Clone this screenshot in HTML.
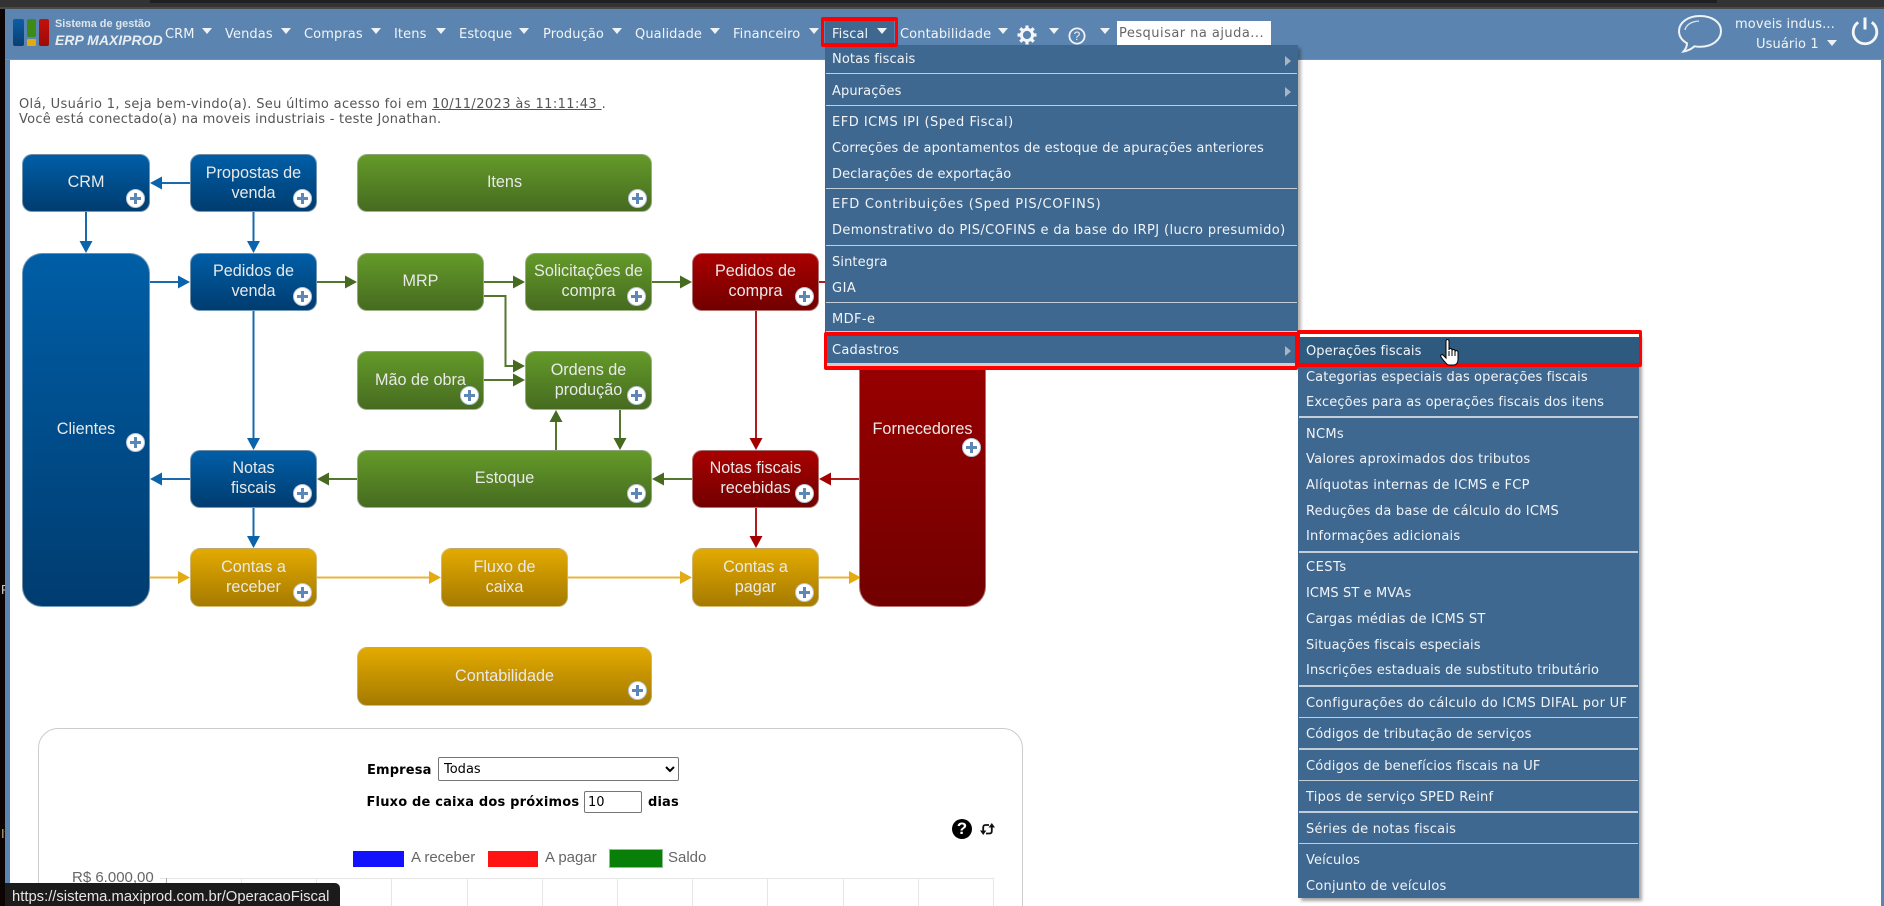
<!DOCTYPE html>
<html lang="pt-BR"><head><meta charset="utf-8"><title>ERP MAXIPROD</title>
<style>
html,body{margin:0;padding:0;width:1884px;height:906px;overflow:hidden;background:#fff}
body{position:relative;font-family:"DejaVu Sans","Liberation Sans",sans-serif}
.a{position:absolute}
.m{position:absolute;font-size:13px;line-height:20px;color:#f2f4f7;white-space:nowrap;letter-spacing:.15px}
.h{letter-spacing:.1px}
.c{position:absolute;width:0;height:0;border-left:5.5px solid transparent;border-right:5.5px solid transparent;border-top:6px solid #f0f3f6}
.s{position:absolute;height:1px;background:#c3cdd8}
.t{position:absolute;width:0;height:0;border-top:5px solid transparent;border-bottom:5px solid transparent;border-left:6px solid #a9b5c1}
.b{position:absolute;box-sizing:border-box;border:1px solid rgba(205,205,205,.55);border-radius:10px;color:#e9e9e9;font:16.2px/20px "Liberation Sans",sans-serif;text-align:center}
.bl{background:linear-gradient(#005ea6,#003c70)}
.gr{background:linear-gradient(#649a29,#466b20)}
.rd{background:linear-gradient(#a80000,#720000)}
.yl{background:linear-gradient(#e3aa00,#a57a00)}
.b span{position:absolute;left:0;right:0;white-space:nowrap}
.p{position:absolute;width:19px;height:19px;box-sizing:border-box;border-radius:50%;background:#fff;border:1px solid #b8c6d8}
.p:before{content:"";position:absolute;left:3px;right:3px;top:7px;height:3px;background:#5c88b8}
.p:after{content:"";position:absolute;top:3px;bottom:3px;left:7px;width:3px;background:#5c88b8}
.red{position:absolute;box-sizing:border-box;border-style:solid;border-color:#f00;border-radius:2px}
.g{position:absolute;top:878px;width:1px;height:28px;background:#e6e6e6}
.l{position:absolute;font:15px/18px "Liberation Sans",sans-serif;color:#666;white-space:nowrap}
.bd{position:absolute;font-size:13px;line-height:20px;font-weight:bold;color:#000;white-space:nowrap;letter-spacing:.15px}
</style></head><body>
<!-- window chrome -->
<div class="a" style="left:0;top:0;width:1884px;height:9px;background:#333"></div>
<div class="a" style="left:150px;top:0;width:1567px;height:3px;background:#1e2024"></div>
<div class="a" style="left:0;top:7px;width:1884px;height:2px;background:#4a4a4a"></div>
<div class="a" style="left:0;top:9px;width:5px;height:897px;background:#0d0404"></div>
<div class="a" style="left:5px;top:9px;width:5px;height:897px;background:#5b85b0"></div>
<div class="a" style="left:1881px;top:9px;width:3px;height:897px;background:#5b85b0"></div>
<div class="a" style="left:1px;top:582px;font:13px/16px 'Liberation Sans',sans-serif;color:#ccc;width:4px;overflow:hidden">R</div>
<div class="a" style="left:1px;top:826px;font:13px/16px 'Liberation Sans',sans-serif;color:#c9a96a;width:4px;overflow:hidden">It</div>
<!-- header -->
<div class="a" style="left:5px;top:9px;width:1879px;height:50px;background:#5b85b0;border-bottom:1px solid #7f8c99"></div>
<!-- logo -->
<div class="a" style="left:13px;top:19px;width:11px;height:27px;border-radius:2px;background:linear-gradient(#0b5ea8,#0a3f70)"></div>
<div class="a" style="left:27px;top:19px;width:9px;height:18px;border-radius:2px;background:#3c8a17"></div>
<div class="a" style="left:27px;top:39px;width:9px;height:7px;border-radius:1px;background:#e2aa10"></div>
<div class="a" style="left:39px;top:19px;width:10px;height:27px;border-radius:2px;background:linear-gradient(#c4100c,#9c0a08)"></div>
<div class="a" style="left:55px;top:16px;font:bold 10.900px/16px 'Liberation Sans',sans-serif;color:#dfe5ec;white-space:nowrap">Sistema de gestão</div>
<div class="a" style="left:55px;top:31px;font:italic bold 14px/18px 'Liberation Sans',sans-serif;color:#e8edf2;white-space:nowrap">ERP MAXIPROD</div>
<!-- top menu -->
<span class="m h" style="left:165px;top:25px">CRM</span><i class="c" style="left:202px;top:28px"></i>
<span class="m h" style="left:225px;top:25px">Vendas</span><i class="c" style="left:281px;top:28px"></i>
<span class="m h" style="left:304px;top:25px">Compras</span><i class="c" style="left:371px;top:28px"></i>
<span class="m h" style="left:394px;top:25px">Itens</span><i class="c" style="left:436px;top:28px"></i>
<span class="m h" style="left:459px;top:25px">Estoque</span><i class="c" style="left:519px;top:28px"></i>
<span class="m h" style="left:543px;top:25px">Produção</span><i class="c" style="left:612px;top:28px"></i>
<span class="m h" style="left:635px;top:25px">Qualidade</span><i class="c" style="left:710px;top:28px"></i>
<span class="m h" style="left:733px;top:25px">Financeiro</span><i class="c" style="left:809px;top:28px"></i>
<div class="a" style="left:825px;top:21px;width:69px;height:24px;background:#3f6890"></div>
<span class="m h" style="left:832px;top:25px">Fiscal</span><i class="c" style="left:877px;top:28px"></i>
<span class="m h" style="left:900px;top:25px">Contabilidade</span><i class="c" style="left:998px;top:28px"></i>
<svg class="a" style="left:1017px;top:25px" width="20" height="20" viewBox="0 0 20 20"><g fill="none" stroke="#f4f6f8"><circle cx="10" cy="10" r="5.6" stroke-width="3"/><path d="M10 0.5v3M10 16.5v3M.5 10h3M16.5 10h3M3.3 3.3l2.1 2.1M14.6 14.6l2.1 2.1M3.3 16.7l2.1-2.1M14.6 5.4l2.1-2.1" stroke-width="3.2"/></g></svg>
<i class="c" style="left:1049px;top:28px"></i>
<svg class="a" style="left:1068px;top:26.500px" width="18" height="18" viewBox="0 0 18 18"><circle cx="9" cy="9" r="7.6" fill="none" stroke="#f0f3f6" stroke-width="1.8"/><text x="9" y="13.2" text-anchor="middle" font-family="Liberation Sans" font-size="12" fill="#f0f3f6">?</text></svg>
<i class="c" style="left:1100px;top:28px"></i>
<div class="a" style="left:1117px;top:21px;width:154px;height:24px;background:#fff;box-sizing:border-box;padding-left:2px;font-size:13px;line-height:26px;letter-spacing:.47px;color:#666;white-space:nowrap;overflow:hidden">Pesquisar na ajuda...</div>
<!-- right -->
<svg class="a" style="left:1676px;top:13px" width="48" height="42" viewBox="0 0 48 42"><path d="M24 3C12 3 3 9.500 3 18c0 5 3 9.500 8 12.300 0 3-1.500 6-3.500 8.200 4-.5 8-2.500 11-5.200 1.700.3 3.500.5 5.500.5 12 0 21-6.800 21-15.800S36 3 24 3z" fill="none" stroke="#f0f3f6" stroke-width="2"/><path d="M9 17c1-5 6-8.500 14-9" fill="none" stroke="#dfe6ee" stroke-width="1.3"/></svg>
<span class="m h" style="left:1735px;top:15px">moveis indus...</span>
<span class="m h" style="left:1756px;top:35px">Usuário 1</span><i class="c" style="left:1827px;top:40px"></i>
<svg class="a" style="left:1851px;top:16px" width="28" height="30" viewBox="0 0 28 30"><path d="M7.200 6.300A11.800 11.800 0 1 0 20.800 6.300" fill="none" stroke="#f4f6f8" stroke-width="2.800"/><path d="M14 1.500v12" stroke="#f4f6f8" stroke-width="3" fill="none"/></svg>
<!-- greeting -->
<div class="a" style="left:19px;top:97px;font-size:13px;line-height:15px;letter-spacing:.32px;color:#555;white-space:nowrap">Olá, Usuário 1, seja bem-vindo(a). Seu último acesso foi em <u style="letter-spacing:.4px">10/11/2023 às 11:11:43 </u>.<br><span style="letter-spacing:.24px">Você está conectado(a) na moveis industriais - teste Jonathan.</span></div>
<!-- diagram connectors -->
<svg class="a" style="left:0;top:0" width="1884" height="906">
<g stroke="#1a68ae" stroke-width="2" fill="#0a63ad">
<path d="M190 183H160M86 212v31M253.500 212v31M150 282h31M253.500 311v131M190 479h-30M253.500 508v31" fill="none"/>
<path stroke="none" d="M150 183l12-6.500v13zM86 253l-6.500-12h13zM253.500 253l-6.500-12h13zM190 282l-12-6.500v13zM253.500 450l-6.500-12h13zM150 479l12-6.500v13zM253.500 548l-6.500-12h13z"/></g>
<g stroke="#53772d" stroke-width="2" fill="#466b20">
<path d="M317 282h30M484 282h31M652 282h30M484 296h21.500v70H516M484 380h31M357 479h-30M556 450v-30M620 410v31M692 479h-30" fill="none"/>
<path stroke="none" d="M357 282l-12-6.500v13zM525 282l-12-6.500v13zM692 282l-12-6.500v13zM525 366l-12-6.500v13zM525 380l-12-6.500v13zM317 479l12-6.500v13zM556 410l-6.500 12h13zM620 450l-6.500-12h13zM652 479l12-6.500v13z"/></g>
<g stroke="#b11c1c" stroke-width="2" fill="#a50000">
<path d="M819 282h6M756 311v131M756 508v31M859 479h-30" fill="none" />
<path stroke="none" d="M756 450l-6.500-12h13zM756 548l-6.500-12h13zM819 479l12-6.500v13z"/></g>
<g stroke="#e9b43d" stroke-width="2" fill="#e3aa12">
<path d="M150 577.500h31M317 577.500h115M568 577.500h115M819 577.500h30" fill="none"/>
<path stroke="none" d="M190 577.500l-12-6.500v13zM441 577.500l-12-6.500v13zM692 577.500l-12-6.500v13zM861 577.500l-12-6.500v13z"/></g>
</svg>
<!-- boxes -->
<div class="b bl" style="left:22px;top:154px;width:128px;height:58px"><span style="top:17px">CRM</span></div>
<div class="b bl" style="left:190px;top:154px;width:127px;height:58px"><span style="top:8px">Propostas de</span><span style="top:28px">venda</span></div>
<div class="b gr" style="left:357px;top:154px;width:295px;height:58px"><span style="top:17px">Itens</span></div>
<div class="b bl" style="left:22px;top:253px;width:128px;height:354px;border-radius:20px"><span style="top:165px">Clientes</span></div>
<div class="b bl" style="left:190px;top:253px;width:127px;height:58px"><span style="top:7px">Pedidos de</span><span style="top:27px">venda</span></div>
<div class="b gr" style="left:357px;top:253px;width:127px;height:58px"><span style="top:17px">MRP</span></div>
<div class="b gr" style="left:525px;top:253px;width:127px;height:58px"><span style="top:7px">Solicitações de</span><span style="top:27px">compra</span></div>
<div class="b rd" style="left:692px;top:253px;width:127px;height:58px"><span style="top:7px">Pedidos de</span><span style="top:27px">compra</span></div>
<div class="b gr" style="left:357px;top:351px;width:127px;height:59px"><span style="top:18px">Mão de obra</span></div>
<div class="b gr" style="left:525px;top:351px;width:127px;height:59px"><span style="top:8px">Ordens de</span><span style="top:28px">produção</span></div>
<div class="b bl" style="left:190px;top:450px;width:127px;height:58px"><span style="top:7px">Notas</span><span style="top:27px">fiscais</span></div>
<div class="b gr" style="left:357px;top:450px;width:295px;height:58px"><span style="top:17px">Estoque</span></div>
<div class="b rd" style="left:692px;top:450px;width:127px;height:58px"><span style="top:7px">Notas fiscais</span><span style="top:27px">recebidas</span></div>
<div class="b yl" style="left:190px;top:548px;width:127px;height:59px"><span style="top:8px">Contas a</span><span style="top:28px">receber</span></div>
<div class="b yl" style="left:441px;top:548px;width:127px;height:59px"><span style="top:8px">Fluxo de</span><span style="top:28px">caixa</span></div>
<div class="b yl" style="left:692px;top:548px;width:127px;height:59px"><span style="top:8px">Contas a</span><span style="top:28px">pagar</span></div>
<div class="b rd" style="left:859px;top:253px;width:127px;height:354px;border-radius:20px"><span style="top:165px">Fornecedores</span></div>
<div class="b yl" style="left:357px;top:647px;width:295px;height:59px"><span style="top:18px">Contabilidade</span></div>
<!-- plus buttons -->
<i class="p" style="left:126px;top:189px"></i><i class="p" style="left:293px;top:189px"></i><i class="p" style="left:628px;top:189px"></i>
<i class="p" style="left:126px;top:433px"></i><i class="p" style="left:293px;top:287px"></i>
<i class="p" style="left:460px;top:386px"></i><i class="p" style="left:293px;top:484px"></i><i class="p" style="left:293px;top:583px"></i>
<i class="p" style="left:627px;top:287px"></i><i class="p" style="left:795px;top:287px"></i><i class="p" style="left:627px;top:386px"></i>
<i class="p" style="left:627px;top:484px"></i><i class="p" style="left:795px;top:484px"></i><i class="p" style="left:795px;top:583px"></i>
<i class="p" style="left:962px;top:438px"></i><i class="p" style="left:628px;top:681px"></i>
<!-- chart panel -->
<div class="a" style="left:38px;top:728px;width:985px;height:200px;box-sizing:border-box;border:1px solid #ccc;border-radius:20px;background:#fff"></div>
<span class="bd" style="left:367px;top:761px">Empresa</span>
<select class="a" style="left:438px;top:757px;width:241px;height:24px;font:13px 'DejaVu Sans',sans-serif;background:#fff;border:1px solid #767676;border-radius:2px;color:#000;padding:0 1px"><option>Todas</option></select>
<span class="bd" style="left:366.500px;top:793px;letter-spacing:.18px">Fluxo de caixa dos próximos</span>
<div class="a" style="left:584px;top:791px;width:58px;height:22px;box-sizing:border-box;border:1px solid #767676;border-radius:2px;font-size:13px;line-height:21px;padding-left:3px;color:#000">10</div>
<span class="bd" style="left:648px;top:793px">dias</span>
<div class="a" style="left:952px;top:819px;width:20px;height:20px;border-radius:50%;background:#000;color:#fff;font:bold 17px/20px 'Liberation Sans',sans-serif;text-align:center">?</div>
<svg class="a" style="left:980px;top:821px" width="15" height="16" viewBox="0 0 15 16"><path d="M9 4H5.500C4 4 3.200 5 3.200 6.500V11M6 12.500h3.500c1.500 0 2.300-1 2.300-2.500V5.500" fill="none" stroke="#111" stroke-width="1.800"/><path d="M0 9.500h6.400L3.200 14zM8.600 6.500H15L11.800 2z" fill="#111"/></svg>
<div class="a" style="left:353px;top:851px;width:51px;height:16px;background:#1212ff"></div><span class="l" style="left:411px;top:849px">A receber</span>
<div class="a" style="left:488px;top:851px;width:50px;height:16px;background:#ff1414"></div><span class="l" style="left:545px;top:849px">A pagar</span>
<div class="a" style="left:609px;top:849px;width:54px;height:19px;box-sizing:border-box;border:1px solid #8fbf8f;background:#087f08"></div><span class="l" style="left:668px;top:849px">Saldo</span>
<span class="l" style="left:72px;top:869px">R$ 6.000,00</span>
<div class="a" style="left:160px;top:878px;width:833px;height:1px;background:#e6e6e6"></div>
<i class="g" style="left:166px;background:#aaa"></i><i class="g" style="left:241px"></i><i class="g" style="left:316px"></i><i class="g" style="left:391px"></i><i class="g" style="left:467px"></i><i class="g" style="left:542px"></i><i class="g" style="left:617px"></i><i class="g" style="left:692px"></i><i class="g" style="left:767px"></i><i class="g" style="left:843px"></i><i class="g" style="left:918px"></i><i class="g" style="left:993px"></i>
<!-- fiscal dropdown -->
<div class="a" style="left:825px;top:45px;width:473px;height:320px;background:#3f6890;box-shadow:3px 3px 3px rgba(0,0,0,.3)"></div>
<span class="m" style="left:832px;top:50px;letter-spacing:.1px">Notas fiscais</span><i class="t" style="left:1285px;top:56px"></i>
<div class="s" style="left:826px;top:73px;width:471px"></div>
<span class="m" style="left:832px;top:82px;letter-spacing:.1px">Apurações</span><i class="t" style="left:1285px;top:87px"></i>
<div class="s" style="left:826px;top:105px;width:471px"></div>
<span class="m" style="left:832px;top:113px;letter-spacing:.5px">EFD ICMS IPI (Sped Fiscal)</span>
<span class="m" style="left:832px;top:139px">Correções de apontamentos de estoque de apurações anteriores</span>
<span class="m" style="left:832px;top:165px;letter-spacing:.07px">Declarações de exportação</span>
<div class="s" style="left:826px;top:188px;width:471px"></div>
<span class="m" style="left:832px;top:195px;letter-spacing:.75px">EFD Contribuições (Sped PIS/COFINS)</span>
<span class="m" style="left:832px;top:221px;letter-spacing:.38px">Demonstrativo do PIS/COFINS e da base do IRPJ (lucro presumido)</span>
<div class="s" style="left:826px;top:245px;width:471px"></div>
<span class="m" style="left:832px;top:253px;letter-spacing:.1px">Sintegra</span>
<span class="m" style="left:832px;top:279px;letter-spacing:.5px">GIA</span>
<div class="s" style="left:826px;top:302px;width:471px"></div>
<span class="m" style="left:832px;top:310px;letter-spacing:.4px">MDF-e</span>
<div class="s" style="left:826px;top:331px;width:471px"></div>
<span class="m" style="left:832px;top:341px;letter-spacing:.25px">Cadastros</span><i class="t" style="left:1285px;top:346px"></i>
<div class="a" style="left:825px;top:363px;width:473px;height:3px;background:#c9cfd3"></div>
<!-- cadastros submenu -->
<div class="a" style="left:1298px;top:334px;width:341px;height:564px;background:#3f6890;box-shadow:3px 3px 3px rgba(0,0,0,.35)"></div>
<div class="a" style="left:1298px;top:334px;width:341px;height:3px;background:#fff"></div>
<div class="a" style="left:1298px;top:337px;width:341px;height:26px;background:#2e5a80"></div>
<span class="m" style="left:1306px;top:342px;letter-spacing:.07px">Operações fiscais</span>
<span class="m" style="left:1306px;top:368px;letter-spacing:.1px">Categorias especiais das operações fiscais</span>
<span class="m" style="left:1306px;top:393px;letter-spacing:.13px">Exceções para as operações fiscais dos itens</span>
<div class="s" style="left:1299px;top:416px;width:339px;height:2px"></div>
<span class="m" style="left:1306px;top:425px;letter-spacing:.3px">NCMs</span>
<span class="m" style="left:1306px;top:450px;letter-spacing:.24px">Valores aproximados dos tributos</span>
<span class="m" style="left:1306px;top:476px;letter-spacing:.27px">Alíquotas internas de ICMS e FCP</span>
<span class="m" style="left:1306px;top:502px;letter-spacing:.22px">Reduções da base de cálculo do ICMS</span>
<span class="m" style="left:1306px;top:527px;letter-spacing:.22px">Informações adicionais</span>
<div class="s" style="left:1299px;top:551px;width:339px;height:2px"></div>
<span class="m" style="left:1306px;top:558px;letter-spacing:.5px">CESTs</span>
<span class="m" style="left:1306px;top:584px;letter-spacing:.1px">ICMS ST e MVAs</span>
<span class="m" style="left:1306px;top:610px;letter-spacing:.24px">Cargas médias de ICMS ST</span>
<span class="m" style="left:1306px;top:636px;letter-spacing:.1px">Situações fiscais especiais</span>
<span class="m" style="left:1306px;top:661px;letter-spacing:.16px">Inscrições estaduais de substituto tributário</span>
<div class="s" style="left:1299px;top:685px;width:339px;height:2px"></div>
<span class="m" style="left:1306px;top:694px;letter-spacing:.31px">Configurações do cálculo do ICMS DIFAL por UF</span>
<div class="s" style="left:1299px;top:717px;width:339px"></div>
<span class="m" style="left:1306px;top:725px;letter-spacing:.14px">Códigos de tributação de serviços</span>
<div class="s" style="left:1299px;top:748px;width:339px;height:2px"></div>
<span class="m" style="left:1306px;top:757px;letter-spacing:.17px">Códigos de benefícios fiscais na UF</span>
<div class="s" style="left:1299px;top:780px;width:339px"></div>
<span class="m" style="left:1306px;top:788px;letter-spacing:.25px">Tipos de serviço SPED Reinf</span>
<div class="s" style="left:1299px;top:811px;width:339px;height:2px"></div>
<span class="m" style="left:1306px;top:820px;letter-spacing:.22px">Séries de notas fiscais</span>
<div class="s" style="left:1299px;top:843px;width:339px"></div>
<span class="m" style="left:1306px;top:851px;letter-spacing:.1px">Veículos</span>
<span class="m" style="left:1306px;top:877px;letter-spacing:.23px">Conjunto de veículos</span>
<!-- red highlights -->
<div class="red" style="left:821px;top:17px;width:77px;height:30px;border-width:4px 3px"></div>
<div class="red" style="left:824px;top:332px;width:474px;height:38px;border-width:4px 3px"></div>
<div class="red" style="left:1297px;top:330px;width:345px;height:37px;border-width:4px 3px"></div>
<!-- cursor -->
<svg class="a" style="left:1440px;top:338px" width="22" height="30" viewBox="0 0 22 30"><path d="M6 3c0-2 3-2 3 0v9c0-2 3-2 3 0v1c0-2 3-2 3 0v1c0-2 3-1.500 3 0v8c0 3-2 5-4 5H9c-2 0-3-2-5-4l-3-4c-1-2 1-3 2-2l3 3z" fill="#fff" stroke="#000" stroke-width="1"/><path d="M9 13v5M12 13v5M15 14v4" stroke="#000" stroke-width="1" fill="none"/></svg>
<!-- status bubble -->
<div class="a" style="left:5px;top:883px;width:335px;height:23px;background:#1b1b1b;border-top-right-radius:5px;box-sizing:border-box;padding-left:7px;font:14.800px/29px 'Liberation Sans',sans-serif;color:#e6e6e6;white-space:nowrap;overflow:hidden">https://sistema.maxiprod.com.br/OperacaoFiscal</div>
</body></html>
